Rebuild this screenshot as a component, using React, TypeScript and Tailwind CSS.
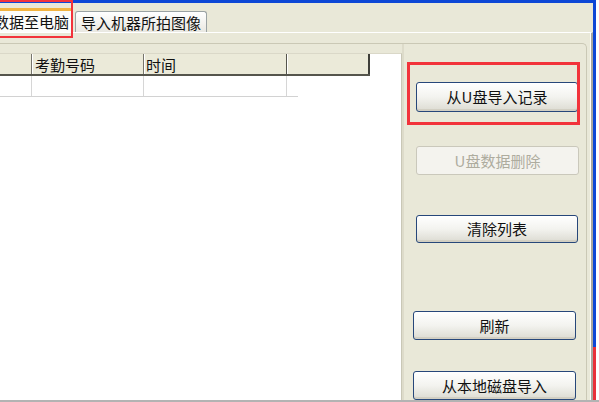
import React from "react";

function XPButton({
  children,
  disabled,
  className = "",
}: {
  children: React.ReactNode;
  disabled?: boolean;
  className?: string;
}) {
  return (
    <div
      className={`flex items-center justify-center rounded-[3px] border text-[15px] leading-none ${
        disabled
          ? "border-[#cac8bb] bg-[#f4f3ee] text-[#aeac9e]"
          : "border-[#27477a] bg-gradient-to-b from-[#ffffff] via-[#f3f3ef] to-[#dcdbd2] text-[#111] shadow-[inset_0_-2px_0_#d2cfc3,inset_0_1px_0_#fff]"
      } ${className}`}
    >
      {children}
    </div>
  );
}

export default function App() {
  return (
    <div className="w-[599px] h-[402px] overflow-hidden bg-white flex flex-col font-['Noto_Sans_CJK_SC',sans-serif]">
      <div className="flex flex-1 min-h-0">
        {/* main window */}
        <div className="relative w-[593px] flex flex-col">
          <div className="h-[3px] bg-[#0d47d6]" />
          {/* tab strip */}
          <div className="h-[29px] bg-[#e9e8d8] flex items-end">
            <div className="-ml-[9px] w-[82px] h-[24px] bg-[#fcfcfa] border-t-[3px] border-r border-[#f2b441] border-r-[#9aa0a0] rounded-tr-[3px] flex items-center justify-center text-[15px] text-[#111] leading-none pb-[1px]">
              数据至电脑
            </div>
            <div className="ml-[2px] w-[132px] h-[21px] border border-b-0 border-[#9aa2a3] rounded-t-[3px] bg-gradient-to-b from-[#ffffff] to-[#e9e8e1] flex items-center justify-center text-[15px] text-[#111] leading-none">
              导入机器所拍图像
            </div>
          </div>
          {/* panel */}
          <div className="flex-1 min-h-0 bg-[#e9e8d8] border-t border-white border-r-2 border-r-[#a9a8a0] flex flex-col">
            <div className="flex-1 min-h-0 border-r border-white pt-[10px] pr-[3px] flex flex-col">
              <div className="flex-1 min-h-0 border-t border-r border-[#cac8b5] rounded-tr-[5px] flex">
                {/* list */}
                <div className="mt-[9px] w-[402px] bg-white border-t border-[#dad8c8] border-r border-r-[#c9c7b6] flex flex-col">
                  <div className="flex h-[22px] w-[370px] bg-[#ebead9] border-b-2 border-[#55554c] text-[15px] text-[#111] leading-none">
                    <div className="w-[32px] border-r border-[#77766c]" />
                    <div className="w-[112px] border-r border-[#77766c] border-l border-l-white flex items-center pl-[2px]">
                      考勤号码
                    </div>
                    <div className="w-[143px] border-r border-[#55554c] border-l border-l-white flex items-center pl-[1px]">
                      时间
                    </div>
                    <div className="w-[83px] border-r-2 border-[#3f3f3a] border-l border-l-white" />
                  </div>
                  <div className="flex h-[21px] w-[298px] border-b border-[#d2d2d2]">
                    <div className="w-[32px] border-r border-[#d6d6d6]" />
                    <div className="w-[112px] border-r border-[#d6d6d6]" />
                    <div className="w-[143px] border-r border-[#d6d6d6]" />
                  </div>
                </div>
                {/* right panel */}
                <div className="flex-1 border-l-2 border-[#dddbca] flex flex-col pl-[12px]">
                  <XPButton className="mt-[38px] h-[31px] w-[162px]">从U盘导入记录</XPButton>
                  <XPButton disabled className="mt-[34px] h-[30px] w-[163px]">
                    U盘数据删除
                  </XPButton>
                  <XPButton className="mt-[40px] h-[30px] w-[162px]">清除列表</XPButton>
                  <XPButton className="mt-[68px] -ml-[3px] h-[30px] w-[163px]">刷新</XPButton>
                  <XPButton className="mt-[31px] -ml-[3px] h-[30px] w-[163px]">从本地磁盘导入</XPButton>
                </div>
              </div>
            </div>
          </div>
          {/* annotation boxes */}
          <div className="absolute left-[-2px] top-0 w-[75px] h-[38px] border-2 border-[#f2333b] pointer-events-none" />
          <div className="absolute left-[407px] top-[62px] w-[173px] h-[63px] border-[3px] border-[#f2333b] pointer-events-none" />
        </div>
        {/* right window edge */}
        <div className="w-[3px] flex flex-col">
          <div className="flex-1 bg-[#0d47d6]" />
          <div className="h-[53px] bg-[#e8303a]" />
        </div>
        <div className="flex-1 bg-white" />
      </div>
      <div className="h-[2px] bg-[#b3b3b3]" />
    </div>
  );
}
